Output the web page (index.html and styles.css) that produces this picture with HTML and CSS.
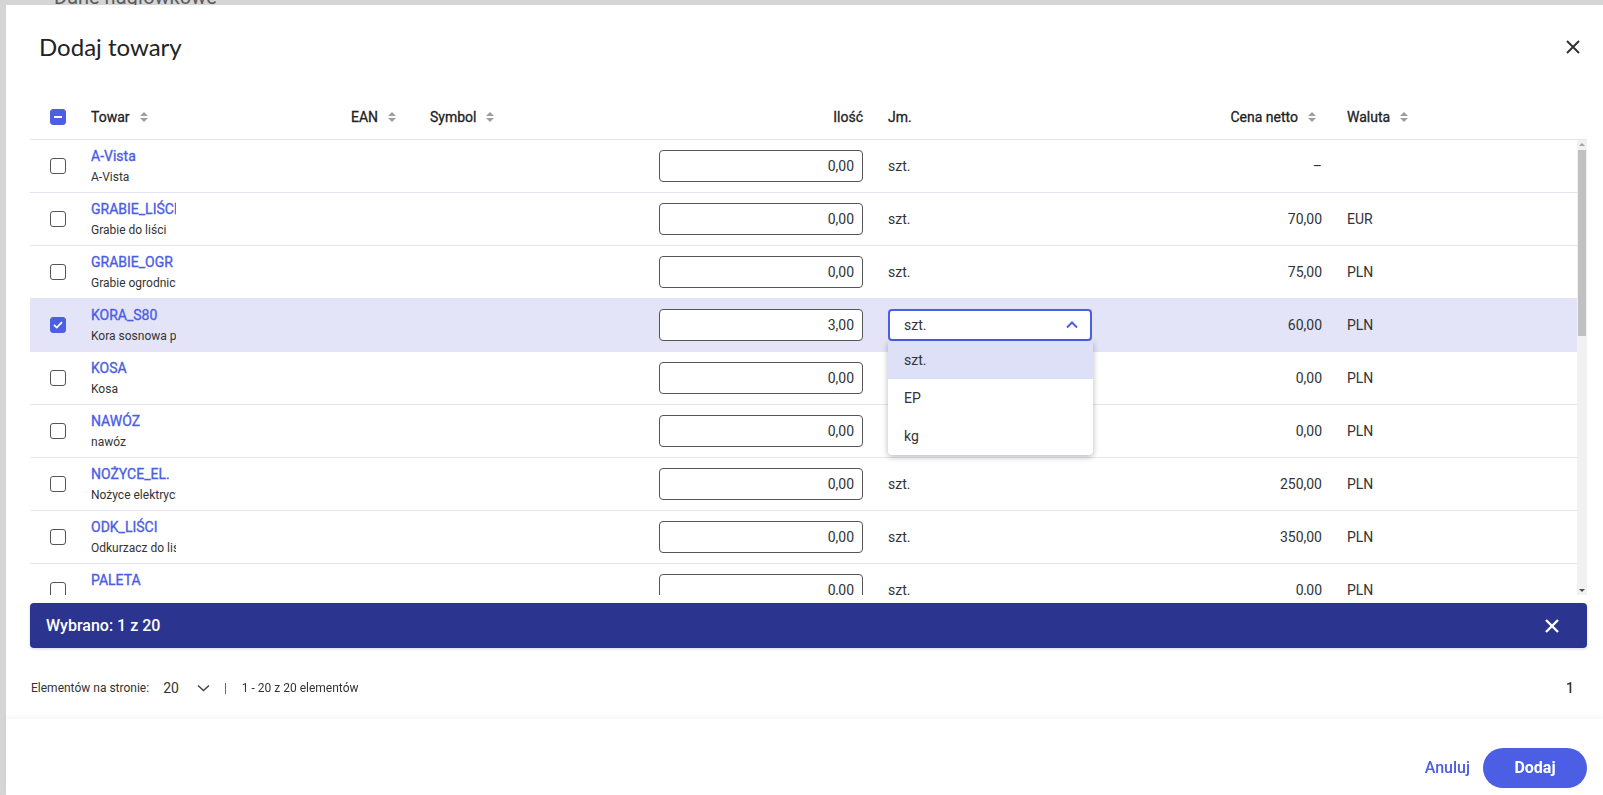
FILE: index.html
```html
<!DOCTYPE html>
<html lang="pl">

<head>
    <meta charset="UTF-8">
    <meta name="viewport" content="width=device-width, initial-scale=1.0">
    <title>Dodaj towary</title>
    <link rel="stylesheet" href="styles.css">
</head>

<body>
    <div class="page-behind">
        <h2 class="page-section">Dane nagłówkowe</h2>
    </div>

    <div class="modal">
        <div class="modal-header">
            <h1 class="modal-title">Dodaj towary</h1>
            <button class="icon-btn close-btn" aria-label="Zamknij">
                <svg width="14" height="14" viewBox="0 0 14 14"><path d="M1 1L13 13M13 1L1 13" stroke="#333" stroke-width="2" fill="none"/></svg>
            </button>
        </div>

        <div class="grid-table">
            <div class="grid-row grid-head">
                <div class="cell cell-check"><span class="checkbox indeterminate"></span></div>
                <div class="cell">Towar <span class="sort"><svg width="10" height="12" viewBox="0 0 10 12"><path d="M1 5L5 1L9 5Z M1 7L5 11L9 7Z" fill="#9e9e9e"/></svg></span></div>
                <div class="cell">EAN <span class="sort"><svg width="10" height="12" viewBox="0 0 10 12"><path d="M1 5L5 1L9 5Z M1 7L5 11L9 7Z" fill="#9e9e9e"/></svg></span></div>
                <div class="cell">Symbol <span class="sort"><svg width="10" height="12" viewBox="0 0 10 12"><path d="M1 5L5 1L9 5Z M1 7L5 11L9 7Z" fill="#9e9e9e"/></svg></span></div>
                <div class="cell cell-num cell-qty">Ilość</div>
                <div class="cell">Jm.</div>
                <div class="cell cell-num cell-price">Cena netto <span class="sort"><svg width="10" height="12" viewBox="0 0 10 12"><path d="M1 5L5 1L9 5Z M1 7L5 11L9 7Z" fill="#9e9e9e"/></svg></span></div>
                <div class="cell">Waluta <span class="sort"><svg width="10" height="12" viewBox="0 0 10 12"><path d="M1 5L5 1L9 5Z M1 7L5 11L9 7Z" fill="#9e9e9e"/></svg></span></div>
            </div>

            <div class="table-body">
                <div class="rows">
                    <div class="grid-row">
                        <div class="cell cell-check"><span class="checkbox"></span></div>
                        <div class="cell"><div class="item"><a class="item-code">A-Vista</a><span class="item-name">A-Vista</span></div></div>
                        <div class="cell"></div>
                        <div class="cell"></div>
                        <div class="cell cell-qty"><input class="qty-input" value="0,00"></div>
                        <div class="cell">szt.</div>
                        <div class="cell cell-num cell-price">–</div>
                        <div class="cell"></div>
                    </div>
                    <div class="grid-row">
                        <div class="cell cell-check"><span class="checkbox"></span></div>
                        <div class="cell"><div class="item"><a class="item-code">GRABIE_LIŚCI</a><span class="item-name">Grabie do liści</span></div></div>
                        <div class="cell"></div>
                        <div class="cell"></div>
                        <div class="cell cell-qty"><input class="qty-input" value="0,00"></div>
                        <div class="cell">szt.</div>
                        <div class="cell cell-num cell-price">70,00</div>
                        <div class="cell">EUR</div>
                    </div>
                    <div class="grid-row">
                        <div class="cell cell-check"><span class="checkbox"></span></div>
                        <div class="cell"><div class="item"><a class="item-code">GRABIE_OGR</a><span class="item-name">Grabie ogrodnicze</span></div></div>
                        <div class="cell"></div>
                        <div class="cell"></div>
                        <div class="cell cell-qty"><input class="qty-input" value="0,00"></div>
                        <div class="cell">szt.</div>
                        <div class="cell cell-num cell-price">75,00</div>
                        <div class="cell">PLN</div>
                    </div>
                    <div class="grid-row selected">
                        <div class="cell cell-check"><span class="checkbox checked"><svg width="10" height="8" viewBox="0 0 10 8"><path d="M1 4L3.8 6.6L9 1.2" stroke="#fff" stroke-width="1.8" fill="none"/></svg></span></div>
                        <div class="cell"><div class="item"><a class="item-code">KORA_S80</a><span class="item-name">Kora sosnowa premium</span></div></div>
                        <div class="cell"></div>
                        <div class="cell"></div>
                        <div class="cell cell-qty"><input class="qty-input" value="3,00"></div>
                        <div class="cell cell-unit">
                            <div class="select open">
                                <span>szt.</span>
                                <svg width="12" height="8" viewBox="0 0 12 8"><path d="M1 6.5L6 1.5L11 6.5" stroke="#4b5ee4" stroke-width="2" fill="none"/></svg>
                            </div>
                            <ul class="select-menu">
                                <li class="active">szt.</li>
                                <li>EP</li>
                                <li>kg</li>
                            </ul>
                        </div>
                        <div class="cell cell-num cell-price">60,00</div>
                        <div class="cell">PLN</div>
                    </div>
                    <div class="grid-row">
                        <div class="cell cell-check"><span class="checkbox"></span></div>
                        <div class="cell"><div class="item"><a class="item-code">KOSA</a><span class="item-name">Kosa</span></div></div>
                        <div class="cell"></div>
                        <div class="cell"></div>
                        <div class="cell cell-qty"><input class="qty-input" value="0,00"></div>
                        <div class="cell"></div>
                        <div class="cell cell-num cell-price">0,00</div>
                        <div class="cell">PLN</div>
                    </div>
                    <div class="grid-row">
                        <div class="cell cell-check"><span class="checkbox"></span></div>
                        <div class="cell"><div class="item"><a class="item-code">NAWÓZ</a><span class="item-name">nawóz</span></div></div>
                        <div class="cell"></div>
                        <div class="cell"></div>
                        <div class="cell cell-qty"><input class="qty-input" value="0,00"></div>
                        <div class="cell"></div>
                        <div class="cell cell-num cell-price">0,00</div>
                        <div class="cell">PLN</div>
                    </div>
                    <div class="grid-row">
                        <div class="cell cell-check"><span class="checkbox"></span></div>
                        <div class="cell"><div class="item"><a class="item-code">NOŻYCE_EL.</a><span class="item-name">Nożyce elektryczne</span></div></div>
                        <div class="cell"></div>
                        <div class="cell"></div>
                        <div class="cell cell-qty"><input class="qty-input" value="0,00"></div>
                        <div class="cell">szt.</div>
                        <div class="cell cell-num cell-price">250,00</div>
                        <div class="cell">PLN</div>
                    </div>
                    <div class="grid-row">
                        <div class="cell cell-check"><span class="checkbox"></span></div>
                        <div class="cell"><div class="item"><a class="item-code">ODK_LIŚCI</a><span class="item-name">Odkurzacz do liści</span></div></div>
                        <div class="cell"></div>
                        <div class="cell"></div>
                        <div class="cell cell-qty"><input class="qty-input" value="0,00"></div>
                        <div class="cell">szt.</div>
                        <div class="cell cell-num cell-price">350,00</div>
                        <div class="cell">PLN</div>
                    </div>
                    <div class="grid-row">
                        <div class="cell cell-check"><span class="checkbox"></span></div>
                        <div class="cell"><div class="item"><a class="item-code">PALETA</a><span class="item-name">Paleta</span></div></div>
                        <div class="cell"></div>
                        <div class="cell"></div>
                        <div class="cell cell-qty"><input class="qty-input" value="0,00"></div>
                        <div class="cell">szt.</div>
                        <div class="cell cell-num cell-price">0,00</div>
                        <div class="cell">PLN</div>
                    </div>
                </div>
                <div class="scrollbar">
                    <span class="scroll-arrow up"></span>
                    <span class="scroll-thumb"></span>
                    <span class="scroll-arrow down"></span>
                </div>
            </div>
        </div>

        <div class="selection-bar">
            <span>Wybrano: 1 z 20</span>
            <button class="icon-btn" aria-label="Wyczyść">
                <svg width="14" height="14" viewBox="0 0 14 14"><path d="M1 1L13 13M13 1L1 13" stroke="#fff" stroke-width="2.4" fill="none"/></svg>
            </button>
        </div>

        <div class="pager">
            <span class="pager-label">Elementów na stronie:</span>
            <span class="pager-size">20</span>
            <svg class="pager-chevron" width="13" height="8" viewBox="0 0 13 8"><path d="M1 1.5L6.5 6.5L12 1.5" stroke="#444" stroke-width="1.5" fill="none"/></svg>
            <span class="pager-sep">|</span>
            <span class="pager-label">1 - 20 z 20 elementów</span>
            <span class="pager-page">1</span>
        </div>

        <div class="modal-footer">
            <button class="btn-link">Anuluj</button>
            <button class="btn-primary">Dodaj</button>
        </div>
    </div>
</body>

</html>
```

FILE: styles.css
```css
body {
    margin: 0;
    font-family: 'Roboto', 'Liberation Sans', sans-serif;
    color: #333;
    background-color: #d5d5d5;
    overflow: hidden;
    height: 795px;
}

.page-behind {
    padding-left: 54px;
}

.page-section {
    margin: -15px 0 0;
    font-size: 20px;
    font-weight: 400;
    color: #5c5c5c;
}

.modal {
    position: fixed;
    top: 5px;
    left: 6px;
    right: 0;
    bottom: 0;
    background-color: white;
    padding: 0 16px 0 24px;
    display: flex;
    flex-direction: column;
}

.modal-header {
    display: flex;
    justify-content: space-between;
    align-items: center;
    padding: 26px 7px 0 9px;
}

.modal-title {
    margin: 0;
    font-family: 'Lato', 'Open Sans', sans-serif;
    font-size: 24px;
    font-weight: 400;
    line-height: 32px;
    color: #222;
}

.icon-btn {
    border: none;
    background: none;
    padding: 0;
    cursor: pointer;
    display: flex;
}

/* table */

.grid-table {
    margin-top: 32px;
}

.grid-row {
    display: grid;
    grid-template-columns: 61px 260px 79px 229px 229px 212px 247px 1fr;
    height: 52px;
    border-bottom: 1px solid #e6e3f4;
    font-size: 14px;
}

.grid-row.selected {
    background-color: #e4e4f8;
}

.grid-head {
    height: 44px;
    font-weight: 400;
    color: #222;
    -webkit-text-stroke: 0.3px #222;
}

.cell {
    display: flex;
    align-items: center;
    position: relative;
}

.cell-check {
    padding-left: 20px;
}

.cell-num {
    justify-content: flex-end;
    padding-right: 25px;
}

.cell-qty {
    justify-content: flex-end;
    padding-right: 25px;
}

.sort {
    display: inline-flex;
    justify-content: center;
    width: 20px;
    margin-left: 4px;
}

.checkbox {
    box-sizing: border-box;
    width: 16px;
    height: 16px;
    border: 1.5px solid #555;
    border-radius: 3px;
    background-color: white;
    display: flex;
    align-items: center;
    justify-content: center;
}

.checkbox.checked,
.checkbox.indeterminate {
    border-color: #4b5ee4;
    background-color: #4b5ee4;
}

.checkbox.indeterminate::after {
    content: '';
    width: 8px;
    height: 2px;
    background-color: white;
}

.item {
    display: flex;
    flex-direction: column;
    gap: 4px;
    max-width: 85px;
    overflow: hidden;
    white-space: nowrap;
}

.item-code {
    font-weight: 400;
    line-height: 18px;
    color: #4b5ee4;
    -webkit-text-stroke: 0.35px #4b5ee4;
}

.item-name {
    font-size: 12px;
    line-height: 16px;
    color: #333;
}

.qty-input {
    box-sizing: border-box;
    width: 204px;
    height: 32px;
    border: 1px solid #555;
    border-radius: 4px;
    padding: 0 8px;
    text-align: right;
    font-family: inherit;
    font-size: 14px;
    color: #333;
    background-color: white;
}

.select {
    box-sizing: border-box;
    width: 204px;
    height: 32px;
    border: 2px solid #4b5ee4;
    border-radius: 4px;
    background-color: white;
    padding: 0 12px 0 14px;
    display: flex;
    align-items: center;
    justify-content: space-between;
}

.select-menu {
    position: absolute;
    top: 42px;
    left: 0;
    width: 205px;
    margin: 0;
    padding: 0;
    list-style: none;
    background-color: white;
    border-radius: 0 0 4px 4px;
    box-shadow: 0 2px 6px rgba(0, 0, 0, 0.28);
    z-index: 2;
}

.select-menu li {
    height: 38px;
    line-height: 38px;
    padding-left: 16px;
    color: #333;
}

.select-menu li.active {
    background-color: #dde0f6;
}

.table-body {
    display: flex;
    height: 455px;
}

.rows {
    flex: 1;
    overflow: hidden;
}

.scrollbar {
    width: 10px;
    background-color: #f1f1f1;
    display: flex;
    flex-direction: column;
    align-items: center;
}

.scroll-arrow {
    width: 0;
    height: 0;
    border-left: 3px solid transparent;
    border-right: 3px solid transparent;
    margin: 3px 0;
}

.scroll-arrow.up {
    border-bottom: 3px solid #a3a3a3;
}

.scroll-arrow.down {
    border-top: 3px solid #505050;
    margin-top: auto;
}

.scroll-thumb {
    width: 8px;
    height: 186px;
    background-color: #c1c1c1;
    margin-top: 1px;
}

/* selection bar and pager */

.selection-bar {
    margin-top: 8px;
    height: 45px;
    background-color: #2b3590;
    border-radius: 4px;
    padding: 0 28px 0 16px;
    display: flex;
    align-items: center;
    justify-content: space-between;
    color: white;
    font-size: 16px;
    font-weight: 500;
    box-shadow: 0 1px 3px rgba(43, 53, 144, 0.2);
}

.pager {
    margin-top: 20px;
    height: 40px;
    display: flex;
    align-items: center;
    padding-left: 1px;
    padding-right: 13px;
    font-size: 12px;
    color: #333;
}

.pager-size {
    margin-left: 14px;
    font-size: 14px;
}

.pager-chevron {
    margin-left: 18px;
}

.pager-sep {
    margin: 0 15px 0 14px;
    color: #555;
}

.pager-page {
    margin-left: auto;
    font-size: 14px;
    font-weight: 500;
}

.modal-footer {
    margin: 11px -16px 0 -24px;
    padding: 21px 16px 0 0;
    display: flex;
    justify-content: flex-end;
    align-items: center;
    gap: 13px;
    flex: 1;
    box-shadow: 0 -3px 6px rgba(0, 0, 0, 0.035);
}

.btn-link {
    border: none;
    background: none;
    padding: 0;
    font-family: inherit;
    font-size: 16px;
    font-weight: 500;
    color: #4b5ee4;
    cursor: pointer;
}

.btn-primary {
    width: 104px;
    height: 40px;
    border: none;
    border-radius: 20px;
    background-color: #4b5ee4;
    color: white;
    font-family: inherit;
    font-size: 16px;
    font-weight: 700;
    cursor: pointer;
}
```
